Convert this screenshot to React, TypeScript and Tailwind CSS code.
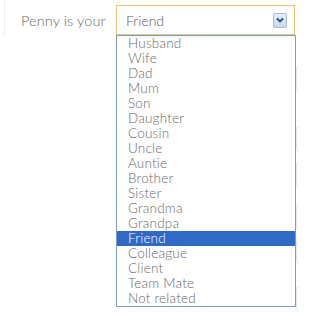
import React from "react";

const options = [
  "Husband",
  "Wife",
  "Dad",
  "Mum",
  "Son",
  "Daughter",
  "Cousin",
  "Uncle",
  "Auntie",
  "Brother",
  "Sister",
  "Grandma",
  "Grandpa",
  "Friend",
  "Colleague",
  "Client",
  "Team Mate",
  "Not related",
];

export default function App() {
  return (
    <div
      className="flex w-[299px] h-[312px] bg-white overflow-hidden"
      style={{ fontFamily: "Lato, 'Open Sans', sans-serif" }}
    >
      {/* faint left edge of a panel behind */}
      <div className="w-[5px] h-[34px] shrink-0 border-r border-[#eeeeee]" />

      <div className="relative w-[291px] shrink-0">
        <div className="flex items-center pt-[5px] pl-[16px]">
          <span className="w-[95px] pt-[2px] text-[14.5px] font-light tracking-[0.1px] text-[#6a6a6a]">
            Penny is your
          </span>
          <div className="flex items-center w-[179px] h-[30px] border border-[#e6c47f] bg-white pl-[9px] pr-[7px]">
            <span className="flex-1 text-[14px] font-light text-[#5e5e5e]">Friend</span>
            <div className="flex items-center justify-center w-[14px] h-[15px] border border-[#a9bdd6] rounded-[2px] bg-gradient-to-b from-[#e4eefb] to-[#c6d8f0]">
              <svg width="8" height="6" viewBox="0 0 8 6">
                <path d="M1 1.5 L4 4.5 L7 1.5" fill="none" stroke="#2b4d7e" strokeWidth="1.8" />
              </svg>
            </div>
          </div>
        </div>

        {/* open dropdown menu */}
        <div className="absolute left-[111px] top-[35px] w-[180px] border border-[#7f9db9] bg-white">
          {options.map((o) => (
            <div
              key={o}
              className={
                o === "Friend"
                  ? "h-[15px] leading-[15px] pl-[11px] text-[13.5px] font-light tracking-[0.2px] bg-[#3169c6] text-white"
                  : "h-[15px] leading-[15px] pl-[11px] text-[13.5px] font-light tracking-[0.2px] text-[#6a6a6a]"
              }
            >
              {o}
            </div>
          ))}
        </div>
      </div>

      {/* faint inputs of the form behind, cut by the right edge */}
      <div className="flex flex-col w-[3px] shrink-0">
        <div className="mt-[66px] h-[28px] w-[10px] rounded-[3px] border border-[#e8e8e8]" />
        <div className="mt-[34px] h-[28px] w-[10px] rounded-[3px] border border-[#e8e8e8]" />
        <div className="mt-[10px] h-[28px] w-[10px] rounded-[3px] border border-[#e8e8e8]" />
        <div className="mt-[16px] h-[28px] w-[10px] rounded-[3px] border border-[#e8e8e8]" />
        <div className="mt-[8px] h-[28px] w-[10px] rounded-[3px] border border-[#e8e8e8]" />
        <div className="mt-[22px] h-[28px] w-[10px] rounded-[3px] border border-[#e8e8e8]" />
      </div>
    </div>
  );
}
